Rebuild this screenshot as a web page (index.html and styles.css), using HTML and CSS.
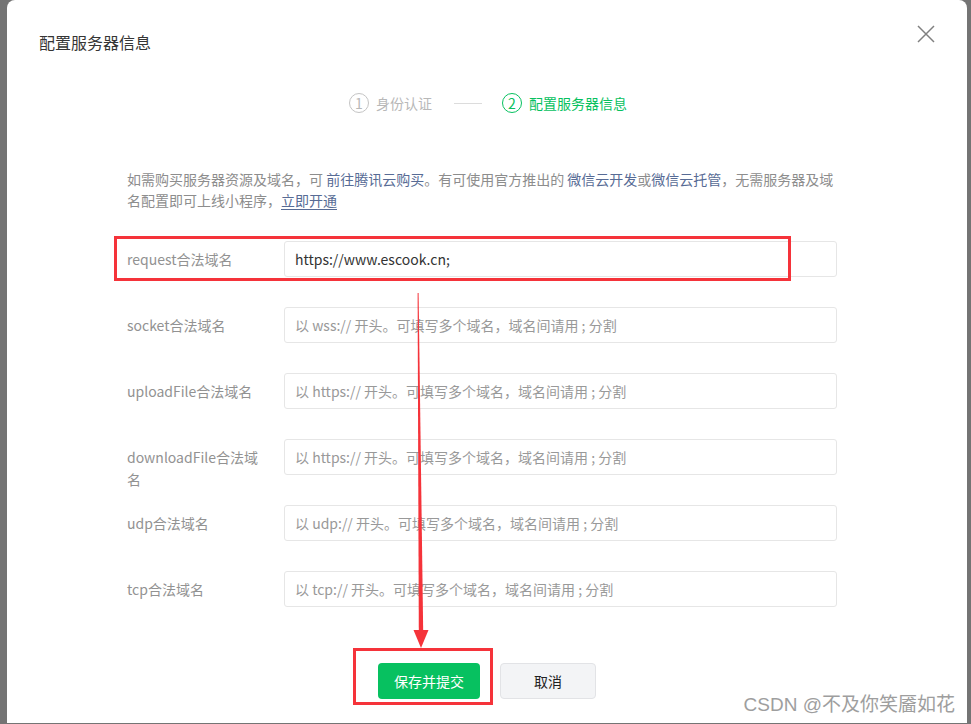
FILE: index.html
```html
<!DOCTYPE html>
<html lang="zh-CN">
<head>
<meta charset="utf-8">
<title>配置服务器信息</title>
<link rel="stylesheet" href="styles.css">
</head>
<body>
<div class="page">
  <div class="dialog">
    <div class="header">
      <div class="title">配置服务器信息</div>
      <svg class="close" width="18" height="18" viewBox="0 0 18 18"><path d="M1 1 L17 17 M17 1 L1 17" stroke="#808080" stroke-width="1.5" fill="none"/></svg>
    </div>
    <div class="steps">
      <div class="step">
        <span class="num">1</span><span class="step-text">身份认证</span>
      </div>
      <span class="step-line"></span>
      <div class="step active">
        <span class="num">2</span><span class="step-text">配置服务器信息</span>
      </div>
    </div>
    <div class="body">
      <div class="desc">
        <div class="desc-line">如需购买服务器资源及域名，可 <a class="link">前往腾讯云购买</a>。有可使用官方推出的 <a class="link">微信云开发</a>或<a class="link">微信云托管</a>，无需服务器及域</div>
        <div class="desc-line">名配置即可上线小程序，<a class="link underline">立即开通</a></div>
      </div>
      <div class="form">
        <div class="row"><label class="label">request合法域名</label><input class="input" value="https://www.escook.cn;"></div>
        <div class="row"><label class="label">socket合法域名</label><input class="input" placeholder="以 wss:// 开头。可填写多个域名，域名间请用 ; 分割"></div>
        <div class="row"><label class="label">uploadFile合法域名</label><input class="input" placeholder="以 https:// 开头。可填写多个域名，域名间请用 ; 分割"></div>
        <div class="row"><label class="label">downloadFile合法域名</label><input class="input" placeholder="以 https:// 开头。可填写多个域名，域名间请用 ; 分割"></div>
        <div class="row"><label class="label">udp合法域名</label><input class="input" placeholder="以 udp:// 开头。可填写多个域名，域名间请用 ; 分割"></div>
        <div class="row"><label class="label">tcp合法域名</label><input class="input" placeholder="以 tcp:// 开头。可填写多个域名，域名间请用 ; 分割"></div>
      </div>
    </div>
    <div class="footer">
      <button class="btn primary">保存并提交</button>
      <button class="btn default">取消</button>
    </div>
  </div>

  <div class="mark mark-row"></div>
  <div class="mark mark-btn"></div>
  <svg class="arrow" width="971" height="724" viewBox="0 0 971 724">
    <polygon points="417.6,293 418.6,293 423.2,632 418.8,632" fill="#f5333a"/>
    <polygon points="413.5,630 428.5,630 421,648" fill="#f5333a"/>
  </svg>
  <div class="watermark">CSDN @不及你笑靥如花</div>
</div>
</body>
</html>
```

FILE: styles.css
```css
* { box-sizing: border-box; }
html, body { margin: 0; padding: 0; }
body {
  background: #747474;
  font-family: "Noto Sans CJK SC", "Noto Sans", sans-serif;
  width: 971px;
  height: 724px;
  overflow: hidden;
}
.page { position: relative; width: 971px; height: 724px; }

.dialog {
  margin-left: 7px;
  width: 960px;
  height: 723px;
  background: #fff;
  border-radius: 8px 8px 0 0;
  display: flex;
  flex-direction: column;
}

.header {
  display: flex;
  justify-content: space-between;
  align-items: flex-start;
  padding: 32px 32px 0 32px;
}
.title { font-size: 16px; line-height: 20px; color: #353535; }
.close { margin-top: -7px; }

.steps {
  display: flex;
  justify-content: center;
  align-items: center;
  margin-top: 41px;
  height: 20px;
  padding-left: 2px;
}
.step { display: flex; align-items: center; color: #b8b8b8; font-size: 14px; }
.num {
  width: 20px; height: 20px;
  border: 1px solid #c4c4c4;
  border-radius: 50%;
  display: flex; align-items: center; justify-content: center;
  font-size: 14px; line-height: 1;
  color: #b8b8b8;
  margin-right: 7px;
}
.step-text { line-height: 20px; }
.step.active, .step.active .num { color: #07c160; }
.step.active .num { border-color: #07c160; }
.step-line { width: 28px; height: 1px; background: #dcdcdc; margin: 0 20px 0 22px; }

.body { padding: 0 130px 0 120px; }
.desc {
  margin-top: 56px;
  font-size: 14px;
  line-height: 21px;
  color: #8d8d8d;
}
.desc-line { white-space: nowrap; }
.link { color: #576b95; text-decoration: none; }
.underline { text-decoration: underline; text-underline-offset: 3px; }

.form { margin-top: 30px; display: flex; flex-direction: column; gap: 30px; }
.row { display: flex; align-items: flex-start; height: 36px; }
.label {
  width: 140px;
  margin-right: 17px;
  padding-top: 7px;
  font-size: 14px;
  line-height: 22px;
  color: #929292;
  flex-shrink: 0;
}
.input {
  flex: 1;
  height: 36px;
  border: 1px solid #e6e6e6;
  border-radius: 3px;
  padding: 0 10px;
  font-family: "Noto Sans CJK SC", "Noto Sans", sans-serif;
  font-size: 14px;
  color: #333;
  outline: none;
}
.input::placeholder { color: #999; }

.footer {
  display: flex;
  justify-content: center;
  gap: 20px;
  margin-top: 56px;
}
.btn {
  height: 36px;
  border-radius: 4px;
  font-family: "Noto Sans CJK SC", "Noto Sans", sans-serif;
  font-size: 14px;
  cursor: pointer;
}
.primary { width: 102px; background: #07c160; color: #fff; border: none; }
.default { width: 96px; background: #f3f4f6; color: #222; border: 1px solid #e2e3e6; }

.mark { position: absolute; border: 3px solid #f5333a; }
.mark-row { left: 114px; top: 236px; width: 677px; height: 45px; }
.mark-btn { left: 353px; top: 648px; width: 140px; height: 57px; }
.arrow { position: absolute; left: 0; top: 0; pointer-events: none; }

.watermark {
  position: absolute;
  right: 16px;
  top: 692px;
  font-family: "Liberation Sans", "Noto Sans CJK SC", sans-serif;
  font-size: 19px;
  line-height: 26px;
  color: #9e9e9e;
}
```
